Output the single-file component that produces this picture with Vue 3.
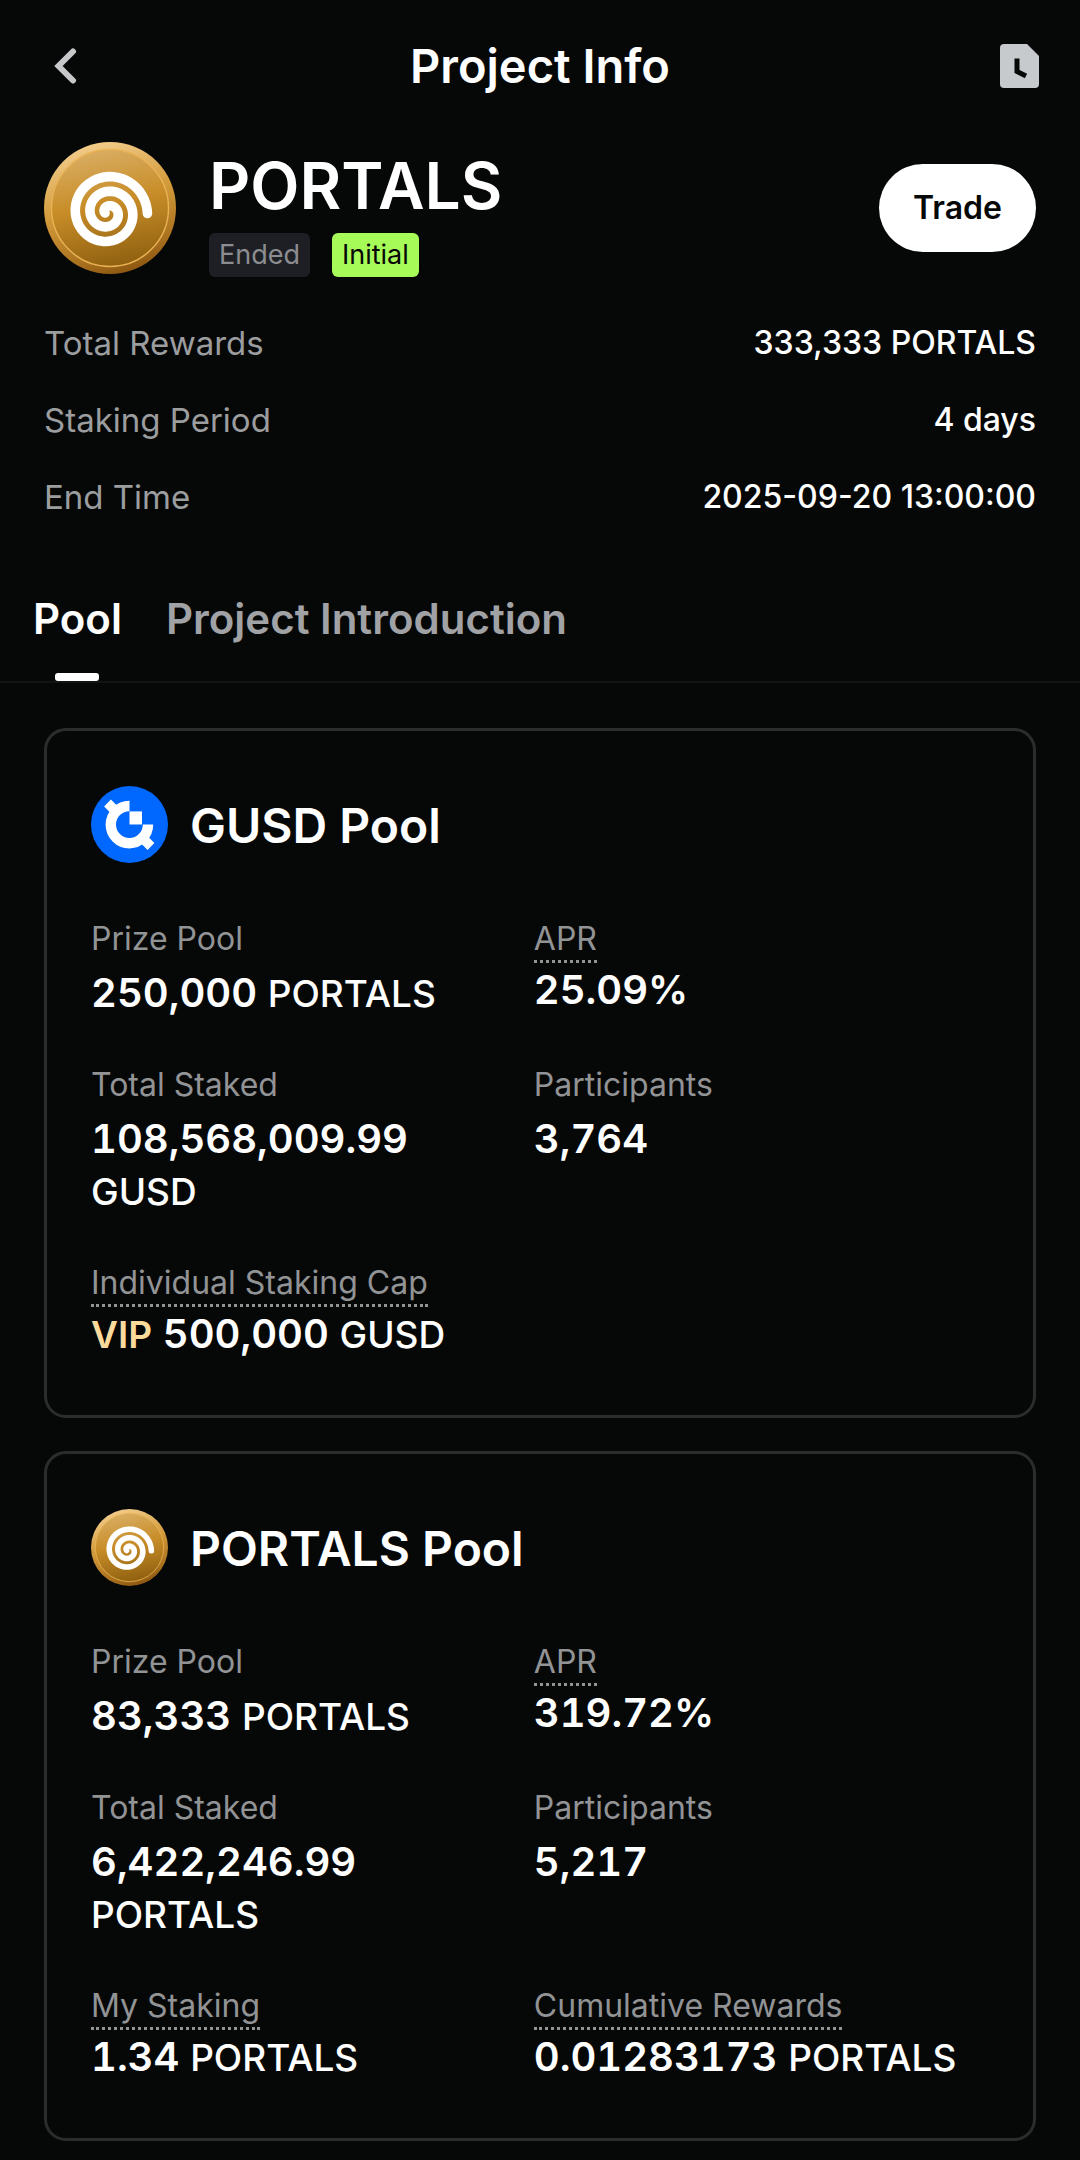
<script setup>
import { ref } from 'vue'

const summary = [
  { label: 'Total Rewards', value: '333,333 PORTALS' },
  { label: 'Staking Period', value: '4 days' },
  { label: 'End Time', value: '2025-09-20 13:00:00' },
]

const tabs = ['Pool', 'Project Introduction']
const activeTab = ref('Pool')

const pools = [
  {
    name: 'GUSD Pool',
    coin: 'gusd',
    stats: [
      { label: 'Prize Pool', amount: '250,000', unit: 'PORTALS' },
      { label: 'APR', amount: '25.09%', hint: true },
      { label: 'Total Staked', amount: '108,568,009.99', unit: 'GUSD', stacked: true },
      { label: 'Participants', amount: '3,764' },
      { label: 'Individual Staking Cap', amount: '500,000', unit: 'GUSD', hint: true, vip: true },
    ],
  },
  {
    name: 'PORTALS Pool',
    coin: 'portals',
    stats: [
      { label: 'Prize Pool', amount: '83,333', unit: 'PORTALS' },
      { label: 'APR', amount: '319.72%', hint: true },
      { label: 'Total Staked', amount: '6,422,246.99', unit: 'PORTALS', stacked: true },
      { label: 'Participants', amount: '5,217' },
      { label: 'My Staking', amount: '1.34', unit: 'PORTALS', hint: true },
      { label: 'Cumulative Rewards', amount: '0.01283173', unit: 'PORTALS', hint: true },
    ],
  },
]

// Archimedean spiral, traced from the outer tip inwards
function spiral(cx, cy, radius, pitch) {
  const points = []
  for (let a = -0.02; radius - (pitch * a) / (2 * Math.PI) > 2.5; a += 0.12) {
    const r = radius - (pitch * a) / (2 * Math.PI)
    points.push(`${(cx + r * Math.cos(a)).toFixed(2)} ${(cy - r * Math.sin(a)).toFixed(2)}`)
  }
  return 'M' + points.join('L')
}
const spiralPath = spiral(63.7, 70.7, 39.7, 14.7)
</script>

<template>
  <main class="page">
    <svg class="defs" width="0" height="0" aria-hidden="true">
      <defs>
        <linearGradient id="rim" x1="0.35" y1="0" x2="0.65" y2="1">
          <stop offset="0" stop-color="#f3cd8c" />
          <stop offset="0.45" stop-color="#d29a3a" />
          <stop offset="0.8" stop-color="#ad7420" />
          <stop offset="1" stop-color="#8a5410" />
        </linearGradient>
        <linearGradient id="face" x1="0.4" y1="0" x2="0.6" y2="1">
          <stop offset="0" stop-color="#d9ad62" />
          <stop offset="0.45" stop-color="#c88d28" />
          <stop offset="1" stop-color="#8f6010" />
        </linearGradient>
        <symbol id="portals" viewBox="0 0 132 132">
          <circle cx="66" cy="66" r="66" fill="url(#rim)" />
          <circle cx="66" cy="66" r="58.5" fill="url(#face)" stroke="#e9b254" stroke-width="1.4" />
          <path :d="spiralPath" fill="none" stroke="#fff" stroke-width="9.6" stroke-linecap="round" stroke-linejoin="round" />
        </symbol>
        <symbol id="gusd" viewBox="0 0 77 77">
          <circle cx="38.5" cy="38.5" r="38.5" fill="#0068ff" />
          <path d="M38.5 20A18.6 18.6 0 1 0 57 38.5" fill="none" stroke="#fff" stroke-width="10.4" />
          <path d="M16.5 17L25 25.5M60 60.5L51 51.5" stroke="#fff" stroke-width="9.6" />
          <path d="M38.5 25.4H51V38.5H38.5Z" fill="#fff" />
        </symbol>
      </defs>
    </svg>

    <header class="bar">
      <button class="icon-btn" type="button" aria-label="Back">
        <svg width="24" height="40" viewBox="0 0 24 40">
          <path d="M20 5.5L5.5 20L20 34.5" fill="none" stroke="#c6c8ca" stroke-width="6" stroke-linejoin="miter" stroke-linecap="round" />
        </svg>
      </button>
      <h1 class="bar-title">Project Info</h1>
      <button class="icon-btn end" type="button" aria-label="History">
        <svg width="39" height="44" viewBox="0 0 39 44">
          <path d="M4 0H27L39 12V40a4 4 0 0 1-4 4H4a4 4 0 0 1-4-4V4a4 4 0 0 1 4-4Z" fill="#c6cacc" />
          <path d="M17 14.5V27.5L26 32" fill="none" stroke="#060808" stroke-width="5" />
        </svg>
      </button>
    </header>

    <section class="project">
      <svg class="project-logo" aria-hidden="true"><use href="#portals" /></svg>
      <div class="project-text">
        <h2 class="project-name">PORTALS</h2>
        <div class="tags">
          <span class="tag">Ended</span>
          <span class="tag fresh">Initial</span>
        </div>
      </div>
      <button class="trade" type="button">Trade</button>
    </section>

    <dl class="summary">
      <div v-for="row in summary" :key="row.label" class="summary-row">
        <dt>{{ row.label }}</dt>
        <dd>{{ row.value }}</dd>
      </div>
    </dl>

    <nav class="tabs">
      <button
        v-for="tab in tabs"
        :key="tab"
        type="button"
        class="tab"
        :class="{ active: tab === activeTab }"
        @click="activeTab = tab"
      >{{ tab }}</button>
    </nav>

    <div class="pools">
      <section v-for="pool in pools" :key="pool.name" class="pool">
        <div class="pool-head">
          <svg class="pool-logo" aria-hidden="true"><use :href="'#' + pool.coin" /></svg>
          <h3 class="pool-name">{{ pool.name }}</h3>
        </div>
        <dl class="stats">
          <div v-for="stat in pool.stats" :key="stat.label" class="stat">
            <dt class="stat-label" :class="{ hint: stat.hint }">{{ stat.label }}</dt>
            <dd class="stat-value">
              <span v-if="stat.vip" class="vip">VIP</span>
              {{ stat.amount }}
              <span v-if="stat.unit" class="unit" :class="{ stacked: stat.stacked }">{{ stat.unit }}</span>
            </dd>
          </div>
        </dl>
      </section>
    </div>
  </main>
</template>

<style>
body {
  background: #060808;
}
</style>

<style scoped>
.page {
  min-height: 100vh;
  box-sizing: border-box;
  padding-bottom: 19px;
  background: #060808;
  color: #fff;
  font-family: Inter, "Liberation Sans", sans-serif;
}
.defs {
  position: absolute;
}
h1,
h2,
h3,
dl,
dd {
  margin: 0;
}
button {
  padding: 0;
  border: 0;
  background: none;
  color: inherit;
  font-family: inherit;
  cursor: pointer;
}
.bar {
  display: grid;
  grid-template-columns: 1fr auto 1fr;
  align-items: center;
  height: 132px;
  padding: 0 41px 0 53px;
}
.icon-btn {
  display: flex;
  justify-self: start;
}
.icon-btn.end {
  justify-self: end;
}
.bar-title {
  margin-right: 12px;
  font-size: 47px;
  line-height: 56px;
  font-weight: 600;
}
.project {
  display: flex;
  align-items: center;
  padding: 7px 44px 0;
}
.project-logo {
  flex: none;
  width: 132px;
  height: 132px;
}
.project-text {
  flex: 1;
  margin-left: 33px;
  padding-top: 10px;
}
.project-name {
  font-size: 64px;
  line-height: 74px;
  font-weight: 600;
}
.tags {
  display: flex;
  gap: 22px;
  margin-top: 10px;
}
.tag {
  padding: 0 10px;
  border-radius: 6px;
  background: #1e1f24;
  color: #8c8d90;
  font-size: 27px;
  line-height: 44px;
}
.tag.fresh {
  background: #a6fb58;
  color: #060808;
}
.trade {
  padding: 0 34px;
  border-radius: 44px;
  background: #fff;
  color: #060808;
  font-size: 32px;
  line-height: 88px;
  font-weight: 600;
}
.summary {
  display: grid;
  gap: 33px;
  padding: 44px 44px 0;
}
.summary-row {
  display: flex;
  justify-content: space-between;
  font-size: 33px;
  line-height: 44px;
}
.summary-row dt {
  color: #9c9d9f;
}
.summary-row dd {
  font-size: 32px;
  font-weight: 500;
}
.tabs {
  display: flex;
  gap: 44px;
  margin-top: 55px;
  padding: 0 33px;
  border-bottom: 2px solid #121414;
}
.tab {
  position: relative;
  height: 107px;
  padding-bottom: 18px;
  color: #a0a2a5;
  font-size: 42px;
  line-height: 56px;
  font-weight: 600;
}
.tab.active {
  color: #fff;
}
.tab.active::after {
  content: "";
  position: absolute;
  bottom: 0;
  left: 50%;
  width: 44px;
  height: 8px;
  margin-left: -22px;
  border-radius: 3px;
  background: #fff;
}
.pools {
  display: grid;
  gap: 33px;
  padding: 45px 44px 0;
}
.pool {
  padding: 55px 44px 54px;
  border: 3px solid #2b2d2d;
  border-radius: 22px;
}
.pool-head {
  display: flex;
  align-items: center;
  gap: 22px;
}
.pool-logo {
  width: 77px;
  height: 77px;
}
.pool-name {
  padding-top: 3px;
  font-size: 48px;
  line-height: 56px;
  font-weight: 600;
}
.stats {
  display: grid;
  grid-template-columns: minmax(0, 36fr) minmax(0, 37fr);
  row-gap: 44px;
  margin-top: 55px;
}
.stat {
  display: flex;
  flex-direction: column;
  align-items: flex-start;
}
.stat-label {
  padding-bottom: 6px;
  color: #929395;
  font-size: 32px;
  line-height: 42px;
}
.stat-label.hint {
  padding-bottom: 0;
  border-bottom: 3px dotted #929395;
}
.stat-value {
  font-size: 40px;
  line-height: 53px;
  font-weight: 600;
  font-variant-numeric: tabular-nums;
  white-space: nowrap;
}
.unit {
  font-size: 37px;
  font-weight: 500;
}
.unit.stacked {
  display: block;
}
.vip {
  color: #fadb9c;
  font-size: 37px;
}
</style>
